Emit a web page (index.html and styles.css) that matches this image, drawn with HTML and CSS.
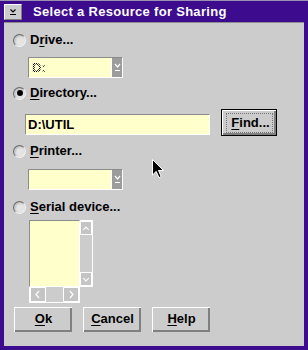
FILE: index.html
```
<!DOCTYPE html>
<html>
<head>
<meta charset="utf-8">
<link rel="stylesheet" href="styles.css">
</head>
<body>
<div class="window">
  <div class="titlebar">
    <div class="sysmenu">
      <svg width="18" height="16" viewBox="0 0 18 16"><path d="M6.5 5.5 L9 8 L11.5 5.5" fill="none" stroke="#000" stroke-width="1.2"/><path d="M6 10.5 H12" stroke="#000" stroke-width="1"/></svg>
    </div>
    <div class="title">Select a Resource for Sharing</div>
  </div>
  <div class="client">
    <div class="radio-row r-drive">
      <span class="radio"></span><span class="label">D<u>r</u>ive...</span>
    </div>
    <div class="combo c-drive">
      <div class="combo-field"><span class="dotted">D:</span></div>
      <div class="combo-btn"><svg width="11" height="19" viewBox="0 0 11 19"><path d="M3 6 L5.5 9 L8 6" fill="none" stroke="#fff" stroke-width="1.2"/><path d="M3 12.5 H8" stroke="#fff"/></svg></div>
    </div>
    <div class="radio-row r-dir">
      <span class="radio checked"></span><span class="label"><u>D</u>irectory...</span>
    </div>
    <div class="entry-row">
      <div class="entry">D:\UTIL</div>
      <button class="btn default"><span class="focus"><u>F</u>ind...</span></button>
    </div>
    <div class="radio-row r-printer">
      <span class="radio"></span><span class="label"><u>P</u>rinter...</span>
    </div>
    <div class="combo c-printer">
      <div class="combo-field"></div>
      <div class="combo-btn"><svg width="11" height="19" viewBox="0 0 11 19"><path d="M3 6 L5.5 9 L8 6" fill="none" stroke="#fff" stroke-width="1.2"/><path d="M3 12.5 H8" stroke="#fff"/></svg></div>
    </div>
    <div class="radio-row r-serial">
      <span class="radio"></span><span class="label"><u>S</u>erial device...</span>
    </div>
    <div class="listbox">
      <div class="list-area"></div>
      <div class="vscroll">
        <div class="sbtn"><svg width="11" height="13" viewBox="0 0 11 13"><path d="M2.5 8 L5.5 5 L8.5 8" fill="none" stroke="#fff" stroke-width="1.2"/></svg></div>
        <div class="track"></div>
        <div class="sbtn"><svg width="11" height="13" viewBox="0 0 11 13"><path d="M2.5 5 L5.5 8 L8.5 5" fill="none" stroke="#fff" stroke-width="1.2"/></svg></div>
      </div>
      <div class="hscroll">
        <div class="sbtn h"><svg width="14" height="13" viewBox="0 0 14 13"><path d="M8 3 L5 6.5 L8 10" fill="none" stroke="#fff" stroke-width="1.2"/></svg></div>
        <div class="track"></div>
        <div class="sbtn h"><svg width="14" height="13" viewBox="0 0 14 13"><path d="M6 3 L9 6.5 L6 10" fill="none" stroke="#fff" stroke-width="1.2"/></svg></div>
      </div>
      <div class="corner"></div>
    </div>
    <div class="buttons">
      <button class="btn"><u>O</u>k</button>
      <button class="btn"><u>C</u>ancel</button>
      <button class="btn"><u>H</u>elp</button>
    </div>
    <svg class="cursor" width="13" height="20" viewBox="0 0 13 20"><path d="M0.5 0.5 V16 L4.2 12.4 L7 18.6 L9.2 17.6 L6.5 11.5 H11.5 Z" fill="#000" stroke="#fff" stroke-width="1"/></svg>
  </div>
</div>
</body>
</html>
```
FILE: styles.css
```
* { box-sizing: border-box; }
html, body { margin: 0; padding: 0; background: #cccccc; }
body { width: 308px; height: 350px; overflow: hidden; }

.window {
  width: 308px;
  height: 350px;
  background: #3d0b8d;
  padding: 0 4px 4px 4px;
  display: flex;
  flex-direction: column;
  border-top: 1px solid #9a8fb0;
}

.titlebar {
  height: 21px;
  display: flex;
  align-items: flex-start;
}

.sysmenu {
  margin-top: 3px;
  width: 18px;
  height: 16px;
  background: #cccccc;
  border-top: 1px solid #fff;
  border-left: 1px solid #fff;
  border-right: 1px solid #808080;
  border-bottom: 1px solid #808080;
  display: flex;
  align-items: center;
  justify-content: center;
}
.sysmenu svg { display: block; margin: -1px; }

.title {
  margin-left: 11px;
  margin-top: 4px;
  color: #fff;
  font: bold 13px/14px "Liberation Sans", Arial, sans-serif;
  letter-spacing: 0.3px;
}

.client {
  flex: 1;
  background: #cccccc;
  border-top: 1px solid #8c8c8c;
  position: relative;
  display: flex;
  flex-direction: column;
  align-items: flex-start;
  padding-left: 9px;
  font: bold 13px/16px "Liberation Sans", Arial, sans-serif;
  color: #000;
}

u { text-decoration: underline; text-decoration-thickness: 1px; text-underline-offset: 2px; }

.radio-row {
  display: flex;
  align-items: center;
  gap: 4px;
  height: 16px;
}
.r-drive { margin-top: 9px; }
.r-dir { margin-top: 7px; }
.r-printer { margin-top: 7px; }
.r-serial { margin-top: 9px; }

.radio {
  width: 13px;
  height: 13px;
  border-radius: 50%;
  background: radial-gradient(circle at 60% 60%, #e4e4e4 0 40%, #b8b8b8 75%);
  border: 1px solid;
  border-color: #6a6a6a #f4f4f4 #f4f4f4 #6a6a6a;
  position: relative;
}
.radio.checked::after {
  content: "";
  position: absolute;
  left: 2.5px;
  top: 2.5px;
  width: 6px;
  height: 6px;
  border-radius: 50%;
  background: #000;
}

.combo {
  margin-left: 15px;
  width: 95px;
  height: 21px;
  display: flex;
  border: 1px solid;
  border-color: #8c8c8c #fff #fff #8c8c8c;
}
.c-drive { margin-top: 9px; }
.c-printer { margin-top: 10px; }
.combo-field {
  flex: 1;
  background: #ffffcc;
  padding-left: 3px;
  line-height: 19px;
}
.dotted {
  font-weight: bold;
  background: repeating-conic-gradient(#000 0 25%, #ffffcc 0 50%) 0 0 / 2px 2px;
  -webkit-background-clip: text;
  background-clip: text;
  color: transparent;
}
.combo-btn {
  width: 11px;
  background: #9c9c9c;
  border-left: 1px solid #fff;
}
.combo-btn svg { display: block; }

.entry-row {
  margin-top: 8px;
  margin-left: 12px;
  display: flex;
  align-items: flex-start;
  gap: 11px;
}
.entry {
  margin-top: 5px;
  width: 185px;
  height: 21px;
  background: #ffffcc;
  border: 1px solid;
  border-color: #8c8c8c #fff #fff #8c8c8c;
  padding-left: 2px;
  line-height: 19px;
}

.btn {
  width: 58px;
  height: 25px;
  background: #cccccc;
  border: 0;
  border-top: 1px solid #fff;
  border-left: 1px solid #fff;
  box-shadow: inset -2px -2px 0 #808080;
  font: bold 13px/16px "Liberation Sans", Arial, sans-serif;
  color: #000;
  padding: 0 0 2px 0;
  display: flex;
  align-items: center;
  justify-content: center;
}
.btn.default {
  width: 56px;
  height: 27px;
  border: 1px solid #000;
  box-shadow: inset 1px 1px 0 #fff, inset -2px -2px 0 #808080;
  padding: 0;
}
.focus {
  border: 1px dotted #777;
  padding: 0 2px 1px 4px;
  line-height: 17px;
  margin-left: 1px;
}

.listbox {
  margin-top: 5px;
  margin-left: 16px;
  width: 64px;
  height: 83px;
  display: grid;
  grid-template-columns: 51px 13px;
  grid-template-rows: 67px 16px;
}
.list-area {
  background: #ffffcc;
  border: 1px solid;
  border-color: #8c8c8c #fff #fff #8c8c8c;
}
.vscroll {
  display: flex;
  flex-direction: column;
  border: 1px solid #fff;
  border-left: 0;
}
.hscroll {
  display: flex;
  border: 1px solid #fff;
  border-top: 0;
}
.track { flex: 1; background: #cccccc; }
.sbtn {
  height: 14px;
  background: #c4c4c4;
  border: 1px solid #fff;
  display: flex;
  align-items: center;
  justify-content: center;
}
.sbtn.h { height: auto; width: 16px; }
.sbtn svg { display: block; }
.corner { background: #cccccc; }

.buttons {
  margin-top: 4px;
  margin-left: 1px;
  display: flex;
  gap: 11px;
}

.cursor {
  position: absolute;
  left: 148px;
  top: 136px;
}
```
